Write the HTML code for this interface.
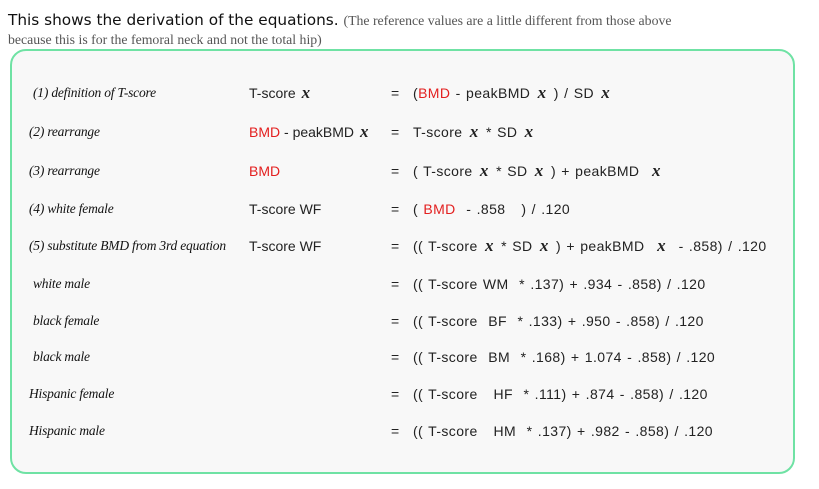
<!DOCTYPE html>
<html><head><meta charset="utf-8"><style>
body{margin:0;width:819px;height:489px;background:#fff;position:relative;overflow:hidden;font-family:"Liberation Sans",sans-serif;}
.h{position:absolute;left:8px;top:11px;font-family:"DejaVu Sans",sans-serif;font-size:15.3px;color:#111;white-space:nowrap;}
.h small{font-family:"Liberation Serif",serif;font-size:13.8px;color:#555;}
.h2{position:absolute;left:8px;top:32px;font-family:"Liberation Serif",serif;font-size:13.8px;color:#555;white-space:nowrap;}
.box{position:absolute;left:10px;top:49px;width:781px;height:421px;border:2px solid #6fe2a4;border-radius:16px;background:#f8f8f8;}
.r{position:absolute;white-space:nowrap;font-size:14px;color:#222;transform:translateY(-50%);}
.q{letter-spacing:0.4px;word-spacing:1px;}
.l{font-family:"Liberation Serif",serif;font-style:italic;font-size:13.5px;letter-spacing:-0.2px;color:#111;}
.red{color:#e32020;}
i.x{font-family:"Liberation Serif",serif;font-weight:bold;font-size:17px;margin:0 2px;}
</style></head><body>
<div class="h">This shows the derivation of the equations. <small>(The reference values are a little different from those above</small></div>
<div class="h2">because this is for the femoral neck and not the total hip)</div>
<div class="box"></div>

<div class="r l" style="left:33px;top:93px">(1) definition of T-score</div>
<div class="r" style="left:249px;top:93px">T-score <i class="x">x</i></div>
<div class="r" style="left:391px;top:93px">=</div>
<div class="r q" style="left:413px;top:93px">(<span class="red">BMD</span> - peakBMD <i class="x">x</i> ) / SD <i class="x">x</i></div>

<div class="r l" style="left:29px;top:132px">(2) rearrange</div>
<div class="r" style="left:249px;top:132px"><span class="red">BMD</span> - peakBMD <i class="x">x</i></div>
<div class="r" style="left:391px;top:132px">=</div>
<div class="r q" style="left:413px;top:132px">T-score <i class="x">x</i> * SD <i class="x">x</i></div>

<div class="r l" style="left:29px;top:171px">(3) rearrange</div>
<div class="r red" style="left:249px;top:171px">BMD</div>
<div class="r" style="left:391px;top:171px">=</div>
<div class="r q" style="left:413px;top:171px">( T-score <i class="x">x</i> * SD <i class="x">x</i> ) + peakBMD&nbsp; <i class="x">x</i></div>

<div class="r l" style="left:29px;top:209px">(4) white female</div>
<div class="r" style="left:249px;top:209px">T-score WF</div>
<div class="r" style="left:391px;top:209px">=</div>
<div class="r q" style="left:413px;top:209px">( <span class="red">BMD</span>&nbsp; - .858&nbsp;&nbsp; ) / .120</div>

<div class="r l" style="left:29px;top:246px">(5) substitute BMD from 3rd equation</div>
<div class="r" style="left:249px;top:246px">T-score WF</div>
<div class="r" style="left:391px;top:246px">=</div>
<div class="r q" style="left:413px;top:246px">(( T-score <i class="x">x</i> * SD <i class="x">x</i> ) + peakBMD&nbsp; <i class="x">x</i>&nbsp; - .858) / .120</div>

<div class="r l" style="left:33px;top:284px">white male</div>
<div class="r" style="left:391px;top:284px">=</div>
<div class="r q" style="left:413px;top:284px">(( T-score WM&nbsp; * .137) + .934 - .858) / .120</div>

<div class="r l" style="left:33px;top:321px">black female</div>
<div class="r" style="left:391px;top:321px">=</div>
<div class="r q" style="left:413px;top:321px">(( T-score&nbsp; BF&nbsp; * .133) + .950 - .858) / .120</div>

<div class="r l" style="left:33px;top:357px">black male</div>
<div class="r" style="left:391px;top:357px">=</div>
<div class="r q" style="left:413px;top:357px">(( T-score&nbsp; BM&nbsp; * .168) + 1.074 - .858) / .120</div>

<div class="r l" style="left:29px;top:394px">Hispanic female</div>
<div class="r" style="left:391px;top:394px">=</div>
<div class="r q" style="left:413px;top:394px">(( T-score&nbsp;&nbsp; HF&nbsp; * .111) + .874 - .858) / .120</div>

<div class="r l" style="left:29px;top:431px">Hispanic male</div>
<div class="r" style="left:391px;top:431px">=</div>
<div class="r q" style="left:413px;top:431px">(( T-score&nbsp;&nbsp; HM&nbsp; * .137) + .982 - .858) / .120</div>
</body></html>
